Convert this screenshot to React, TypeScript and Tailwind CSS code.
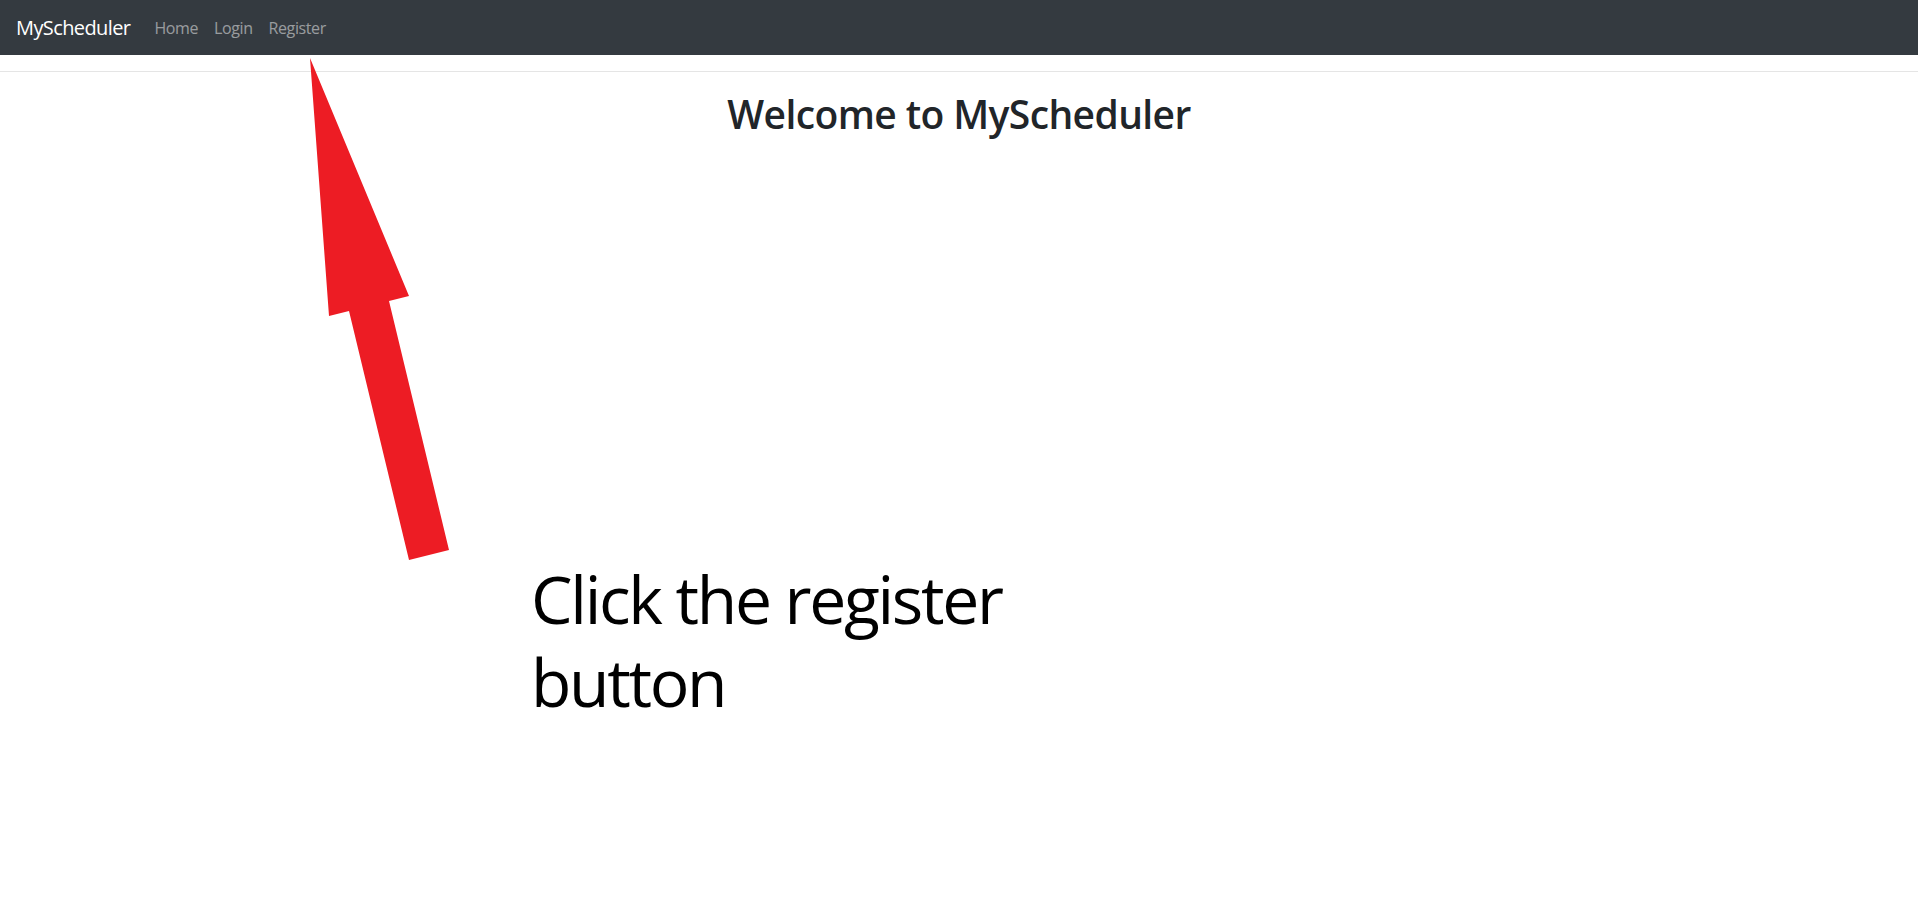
import React from 'react';

const font = { fontFamily: '"Segoe UI", "Open Sans", "Noto Sans", sans-serif' };

function NavBar() {
  return (
    <nav className="flex h-[55px] items-center bg-[#343a40] px-4">
      <a href="#" className="mr-4 text-[20px] leading-[30px] tracking-[-0.6px] text-white">
        MyScheduler
      </a>
      <ul className="flex">
        {['Home', 'Login', 'Register'].map((item) => (
          <li key={item}>
            <a href="#" className="px-2 text-[16px] leading-6 tracking-[-0.4px] text-white/50">
              {item}
            </a>
          </li>
        ))}
      </ul>
    </nav>
  );
}

export default function App() {
  return (
    <div className="relative min-h-[915px] bg-white text-[#212529]" style={font}>
      <header className="border-b border-[#e5e5e5] pb-4">
        <NavBar />
      </header>

      <main className="px-4 pt-[18px]">
        <h1 className="text-center text-[39px] font-semibold leading-[48px] tracking-[-0.6px]">
          Welcome to MyScheduler
        </h1>
      </main>

      {/* ------- annotation overlay ------- */}
      <svg
        className="pointer-events-none absolute left-0 top-0"
        width="1918"
        height="915"
        viewBox="0 0 1918 915"
      >
        <polygon
          points="310,58 409,296 389,301 449,550 409,560 349,311 329,316"
          fill="#ed1c24"
        />
      </svg>
      <p className="absolute left-[531px] top-[557px] w-[560px] text-[66px] font-normal leading-[83px] tracking-[-2.3px] text-black">
        Click the register button
      </p>
    </div>
  );
}
